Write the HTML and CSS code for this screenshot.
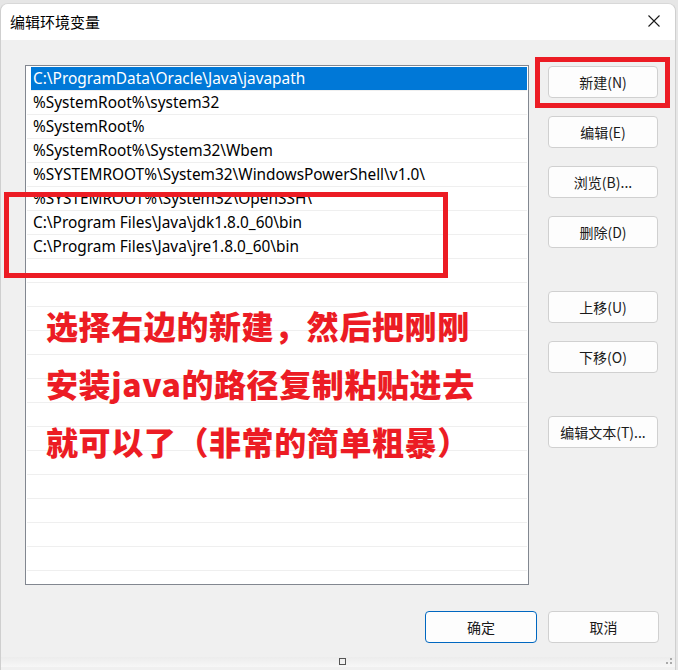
FILE: index.html
```html
<!DOCTYPE html>
<html lang="zh-CN">
<head>
<meta charset="utf-8">
<title>编辑环境变量</title>
<link rel="stylesheet" href="styles.css">
</head>
<body>
<div class="window">
  <div class="titlebar">
    <span class="title">编辑环境变量</span>
    <svg class="close" width="12" height="12" viewBox="0 0 12 12"><path d="M0.5 0.5 L11.5 11.5 M11.5 0.5 L0.5 11.5" stroke="#1a1a1a" stroke-width="1.1" fill="none"/></svg>
  </div>
  <div class="content">
    <div class="main">
      <div class="listbox">
        <div class="row selected">C:\ProgramData\Oracle\Java\javapath</div>
        <div class="row">%SystemRoot%\system32</div>
        <div class="row">%SystemRoot%</div>
        <div class="row">%SystemRoot%\System32\Wbem</div>
        <div class="row">%SYSTEMROOT%\System32\WindowsPowerShell\v1.0\</div>
        <div class="row">%SYSTEMROOT%\System32\OpenSSH\</div>
        <div class="row">C:\Program Files\Java\jdk1.8.0_60\bin</div>
        <div class="row">C:\Program Files\Java\jre1.8.0_60\bin</div>
        <div class="row"></div>
        <div class="row"></div>
        <div class="row"></div>
        <div class="row"></div>
        <div class="row"></div>
        <div class="row"></div>
        <div class="row"></div>
        <div class="row"></div>
        <div class="row"></div>
        <div class="row"></div>
        <div class="row"></div>
        <div class="row"></div>
        <div class="row"></div>
        <div class="note">选择右边的新建，然后把刚刚<br>安装java的路径复制粘贴进去<br>就可以了（非常的简单粗暴）</div>
      </div>
      <div class="buttons">
        <button class="btn">新建(N)</button>
        <button class="btn">编辑(E)</button>
        <button class="btn">浏览(B)...</button>
        <button class="btn">删除(D)</button>
        <button class="btn gap">上移(U)</button>
        <button class="btn">下移(O)</button>
        <button class="btn gap2">编辑文本(T)...</button>
      </div>
    </div>
    <div class="footer">
      <button class="btn primary">确定</button>
      <button class="btn">取消</button>
    </div>
    <div class="bottomrim"><span class="sq"></span><span class="grip"></span></div>
  </div>
  <div class="mark mark-rows"></div>
  <div class="mark mark-new"></div>
</div>
</body>
</html>
```

FILE: styles.css
```css
html, body {
  margin: 0;
  padding: 0;
}
body {
  width: 678px;
  height: 670px;
  background: #e6e6e6;
  overflow: hidden;
  font-family: "Noto Sans", "Noto Sans CJK SC", sans-serif;
}
.window {
  position: relative;
  margin-top: 3px;
  width: 676px;
  height: 667px;
  border-left: 1px solid #cfcfcf;
  border-right: 1px solid #cfcfcf;
  border-top: 1px solid #d8d8d8;
  border-radius: 8px 8px 0 0;
  background: #f0f0f0;
  overflow: hidden;
  box-sizing: border-box;
}
.titlebar {
  height: 36px;
  background: #ffffff;
  display: flex;
  align-items: center;
  justify-content: space-between;
  padding: 0 15px 0 9px;
}
.title {
  font-family: "Noto Sans CJK SC", sans-serif;
  font-size: 15px;
  color: #000;
  position: relative;
  top: -1px;
}
.close {
  position: relative;
  top: -1px;
}
.content {
  height: 627px;
  background: #f0f0f0;
  display: flex;
  flex-direction: column;
}
.main {
  display: flex;
  padding-top: 25px;
  padding-left: 24px;
}
.listbox {
  position: relative;
  width: 504px;
  height: 520px;
  box-sizing: border-box;
  border: 1px solid #828790;
  background: #ffffff;
  padding: 1px 1px 0 1px;
  overflow: hidden;
}
.row {
  height: 23px;
  border-bottom: 1px solid #efefef;
  padding-left: 6px;
  font-size: 15.4px;
  line-height: 24px;
  color: #000;
  white-space: nowrap;
}
.row.selected {
  background: #0078d7;
  color: #ffffff;
  margin-left: 4px;
  padding-left: 2px;
}
.note {
  position: absolute;
  left: 20px;
  top: 230px;
  font-family: "Noto Sans CJK SC", sans-serif;
  font-weight: 900;
  font-size: 32px;
  line-height: 58px;
  color: #ec1c24;
  letter-spacing: 0.6px;
  white-space: nowrap;
}
.buttons {
  display: flex;
  flex-direction: column;
  margin-left: 19px;
  padding-top: 1px;
}
.btn {
  width: 110px;
  height: 32px;
  box-sizing: border-box;
  background: #fdfdfd;
  border: 1px solid #d0d0d0;
  border-radius: 4px;
  font-family: "Noto Sans CJK SC", sans-serif;
  font-size: 14px;
  color: #1a1a1a;
  padding: 0;
  margin: 0 0 18px 0;
}
.btn.gap {
  margin-top: 25px;
}
.btn.gap2 {
  margin-top: 25px;
}
.footer {
  display: flex;
  justify-content: flex-end;
  gap: 11px;
  padding: 26px 16px 0 0;
}
.footer .btn {
  margin: 0;
  width: 111px;
}
.btn.primary {
  border: 1px solid #0067c0;
  width: 112px;
}
.bottomrim {
  margin-top: auto;
  height: 10px;
  position: relative;
  background: linear-gradient(#ececec, #f7f7f7);
}
.sq {
  position: absolute;
  left: 338px;
  top: 1px;
  width: 5px;
  height: 5px;
  border: 1px solid #555;
}
.grip {
  position: absolute;
  right: 2px;
  top: 0;
  width: 8px;
  height: 8px;
  background:
    radial-gradient(circle, #aaa 1px, transparent 1.3px) 0 4px / 4px 4px no-repeat,
    radial-gradient(circle, #aaa 1px, transparent 1.3px) 4px 4px / 4px 4px no-repeat,
    radial-gradient(circle, #aaa 1px, transparent 1.3px) 4px 0 / 4px 4px no-repeat;
}
.mark {
  position: absolute;
  border: 5px solid #ec1c24;
  box-sizing: border-box;
}
.mark-rows {
  left: 3px;
  top: 188px;
  width: 444px;
  height: 86px;
}
.mark-new {
  left: 534px;
  top: 53px;
  width: 135px;
  height: 51px;
}
```
